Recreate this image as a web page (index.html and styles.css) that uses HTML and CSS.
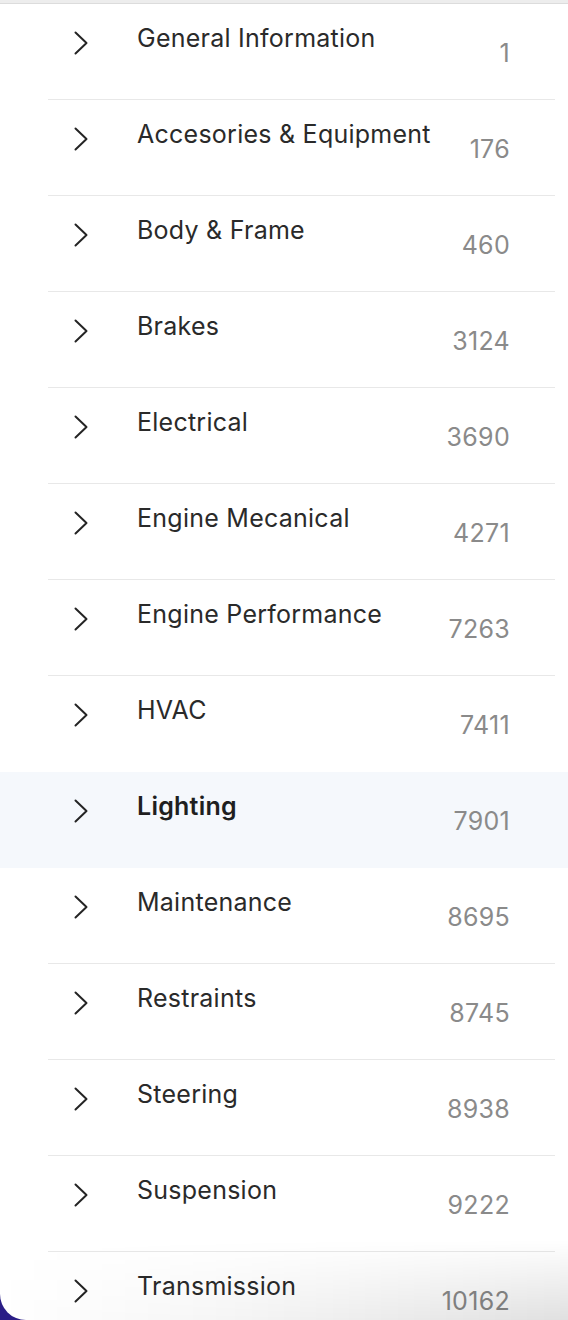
FILE: index.html
```html
<!DOCTYPE html>
<html lang="en">
<head>
<meta charset="utf-8">
<title>Categories</title>
<link rel="stylesheet" href="styles.css">
</head>
<body>
<div class="panel">
  <div class="topbar"></div>
  <ul class="list">
    <li class="row"><svg class="chev" viewBox="0 0 14 24"><path d="M1.5 1.5 L12.5 12 L1.5 22.5"/></svg><span class="label">General Information</span><span class="count">1</span></li>
    <li class="row"><svg class="chev" viewBox="0 0 14 24"><path d="M1.5 1.5 L12.5 12 L1.5 22.5"/></svg><span class="label">Accesories &amp; Equipment</span><span class="count">176</span></li>
    <li class="row"><svg class="chev" viewBox="0 0 14 24"><path d="M1.5 1.5 L12.5 12 L1.5 22.5"/></svg><span class="label">Body &amp; Frame</span><span class="count">460</span></li>
    <li class="row"><svg class="chev" viewBox="0 0 14 24"><path d="M1.5 1.5 L12.5 12 L1.5 22.5"/></svg><span class="label">Brakes</span><span class="count">3124</span></li>
    <li class="row"><svg class="chev" viewBox="0 0 14 24"><path d="M1.5 1.5 L12.5 12 L1.5 22.5"/></svg><span class="label">Electrical</span><span class="count">3690</span></li>
    <li class="row"><svg class="chev" viewBox="0 0 14 24"><path d="M1.5 1.5 L12.5 12 L1.5 22.5"/></svg><span class="label">Engine Mecanical</span><span class="count">4271</span></li>
    <li class="row"><svg class="chev" viewBox="0 0 14 24"><path d="M1.5 1.5 L12.5 12 L1.5 22.5"/></svg><span class="label">Engine Performance</span><span class="count">7263</span></li>
    <li class="row"><svg class="chev" viewBox="0 0 14 24"><path d="M1.5 1.5 L12.5 12 L1.5 22.5"/></svg><span class="label">HVAC</span><span class="count">7411</span></li>
    <li class="row active"><svg class="chev" viewBox="0 0 14 24"><path d="M1.5 1.5 L12.5 12 L1.5 22.5"/></svg><span class="label">Lighting</span><span class="count">7901</span></li>
    <li class="row after-active"><svg class="chev" viewBox="0 0 14 24"><path d="M1.5 1.5 L12.5 12 L1.5 22.5"/></svg><span class="label">Maintenance</span><span class="count">8695</span></li>
    <li class="row"><svg class="chev" viewBox="0 0 14 24"><path d="M1.5 1.5 L12.5 12 L1.5 22.5"/></svg><span class="label">Restraints</span><span class="count">8745</span></li>
    <li class="row"><svg class="chev" viewBox="0 0 14 24"><path d="M1.5 1.5 L12.5 12 L1.5 22.5"/></svg><span class="label">Steering</span><span class="count">8938</span></li>
    <li class="row"><svg class="chev" viewBox="0 0 14 24"><path d="M1.5 1.5 L12.5 12 L1.5 22.5"/></svg><span class="label">Suspension</span><span class="count">9222</span></li>
    <li class="row"><svg class="chev" viewBox="0 0 14 24"><path d="M1.5 1.5 L12.5 12 L1.5 22.5"/></svg><span class="label">Transmission</span><span class="count">10162</span></li>
  </ul>
  <div class="fade"></div>
</div>
</body>
</html>
```
FILE: styles.css
```css
html, body {
  margin: 0;
  padding: 0;
}
body {
  background: #2a1d86;
  font-family: Inter, "Liberation Sans", Arial, sans-serif;
  width: 568px;
  height: 1320px;
  overflow: hidden;
}
.panel {
  position: relative;
  background: #ffffff;
  height: 1320px;
  border-bottom-left-radius: 26px;
  overflow: hidden;
}
.topbar {
  height: 3px;
  background: #ededed;
  border-bottom: 1px solid #dcdcdc;
}
.list {
  list-style: none;
  margin: 0;
  padding: 0;
}
.row {
  position: relative;
  display: flex;
  align-items: flex-start;
  height: 96px;
  box-sizing: border-box;
  padding-left: 74px;
  padding-right: 58px;
}
.row + .row::before {
  content: "";
  position: absolute;
  top: -1px;
  left: 48px;
  right: 13px;
  height: 1px;
  background: #e8e8e8;
}
.row.active {
  background: #f5f8fc;
}
.row.active::before,
.row.after-active::before {
  display: none;
}
.chev {
  width: 14px;
  height: 24px;
  margin-top: 27px;
  flex: none;
}
.chev path {
  fill: none;
  stroke: #242424;
  stroke-width: 2;
  stroke-linecap: round;
  stroke-linejoin: round;
}
.label {
  margin-left: 49px;
  margin-top: 19px;
  font-size: 25px;
  letter-spacing: 0.25px;
  line-height: 30px;
  color: #2a2a2a;
  white-space: nowrap;
}
.active .label {
  font-weight: 600;
  color: #1f1f1f;
}
.count {
  margin-left: auto;
  margin-top: 34px;
  font-size: 25px;
  letter-spacing: 0.3px;
  line-height: 30px;
  color: #8a8a8a;
}
.fade {
  position: absolute;
  left: 0;
  right: 0;
  bottom: 0;
  height: 80px;
  background: linear-gradient(to right, rgba(255,255,255,0) 0%, rgba(0,0,0,0.04) 40%, rgba(0,0,0,0.12) 100%);
  -webkit-mask-image: linear-gradient(to bottom, transparent 0%, #000 100%);
  mask-image: linear-gradient(to bottom, transparent 0%, #000 100%);
  pointer-events: none;
}
```
